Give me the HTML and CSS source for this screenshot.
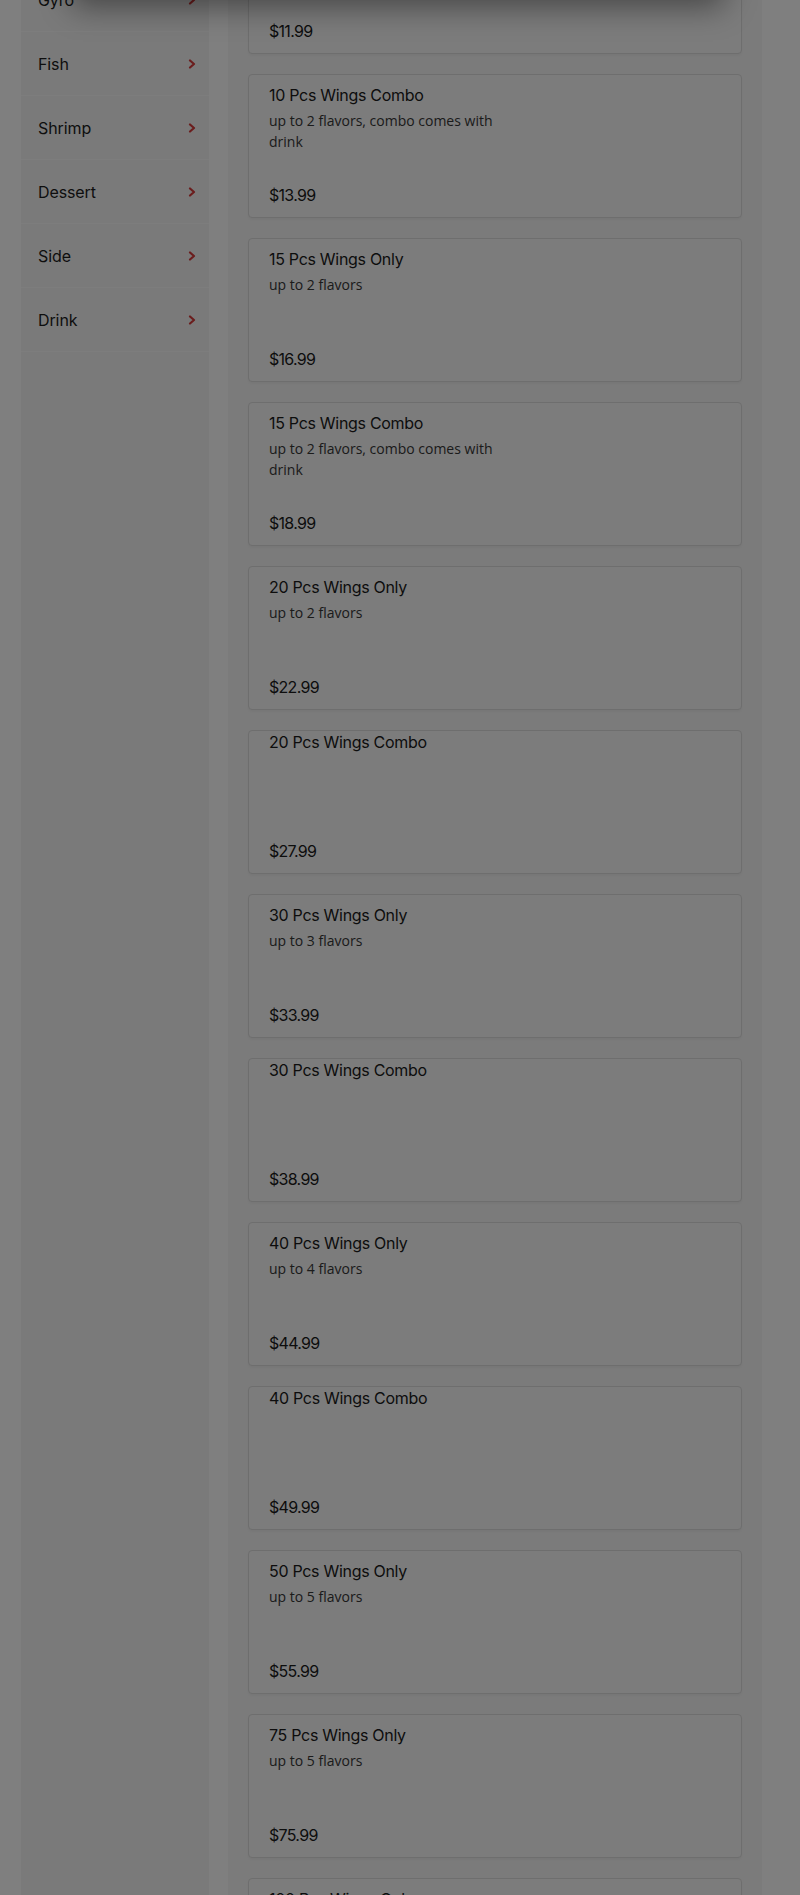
FILE: index.html
```html
<!DOCTYPE html>
<html lang="en">
<head>
<meta charset="utf-8">
<title>Menu</title>
<link rel="stylesheet" href="styles.css">
</head>
<body>
<div class="page">
  <aside class="sidebar">
    <ul class="cats">
      <li class="cat"><span>Gyro</span><svg class="chev" viewBox="0 0 8 10"><path d="M2 1.5 L6 5 L2 8.5"/></svg></li>
      <li class="cat"><span>Fish</span><svg class="chev" viewBox="0 0 8 10"><path d="M2 1.5 L6 5 L2 8.5"/></svg></li>
      <li class="cat"><span>Shrimp</span><svg class="chev" viewBox="0 0 8 10"><path d="M2 1.5 L6 5 L2 8.5"/></svg></li>
      <li class="cat"><span>Dessert</span><svg class="chev" viewBox="0 0 8 10"><path d="M2 1.5 L6 5 L2 8.5"/></svg></li>
      <li class="cat"><span>Side</span><svg class="chev" viewBox="0 0 8 10"><path d="M2 1.5 L6 5 L2 8.5"/></svg></li>
      <li class="cat"><span>Drink</span><svg class="chev" viewBox="0 0 8 10"><path d="M2 1.5 L6 5 L2 8.5"/></svg></li>
    </ul>
  </aside>
  <main class="main">
    <div class="cards">
      <div class="card"><div class="title">10 Pcs Wings Only</div><div class="desc">up to 2 flavors</div><div class="price">$11.99</div></div>
      <div class="card"><div class="title">10 Pcs Wings Combo</div><div class="desc">up to 2 flavors, combo comes with drink</div><div class="price">$13.99</div></div>
      <div class="card"><div class="title">15 Pcs Wings Only</div><div class="desc">up to 2 flavors</div><div class="price">$16.99</div></div>
      <div class="card"><div class="title">15 Pcs Wings Combo</div><div class="desc">up to 2 flavors, combo comes with drink</div><div class="price">$18.99</div></div>
      <div class="card"><div class="title">20 Pcs Wings Only</div><div class="desc">up to 2 flavors</div><div class="price">$22.99</div></div>
      <div class="card card--plain"><div class="title">20 Pcs Wings Combo</div><div class="price">$27.99</div></div>
      <div class="card"><div class="title">30 Pcs Wings Only</div><div class="desc">up to 3 flavors</div><div class="price">$33.99</div></div>
      <div class="card card--plain"><div class="title">30 Pcs Wings Combo</div><div class="price">$38.99</div></div>
      <div class="card"><div class="title">40 Pcs Wings Only</div><div class="desc">up to 4 flavors</div><div class="price">$44.99</div></div>
      <div class="card card--plain"><div class="title">40 Pcs Wings Combo</div><div class="price">$49.99</div></div>
      <div class="card"><div class="title">50 Pcs Wings Only</div><div class="desc">up to 5 flavors</div><div class="price">$55.99</div></div>
      <div class="card"><div class="title">75 Pcs Wings Only</div><div class="desc">up to 5 flavors</div><div class="price">$75.99</div></div>
      <div class="card"><div class="title">100 Pcs Wings Only</div><div class="desc">up to 5 flavors</div><div class="price">$99.99</div></div>
    </div>
  </main>
</div>
<div class="overlay"></div>
<div class="modal"></div>
</body>
</html>
```

FILE: styles.css
```css
html, body {
  margin: 0;
  padding: 0;
  overflow: hidden;
  background: #ffffff;
}

body {
  font-family: Inter, "Liberation Sans", sans-serif;
  color: #222222;
}

.page {
  display: flex;
  align-items: stretch;
  gap: 19px;
  padding-left: 21px;
  min-height: 1895px;
}

.sidebar {
  width: 188px;
  flex: none;
  background: #f5f5f5;
}

.cats {
  list-style: none;
  margin: -32px 0 0 0;
  padding: 0;
}

.cat {
  height: 64px;
  box-sizing: border-box;
  display: flex;
  align-items: center;
  justify-content: space-between;
  padding: 0 13px 0 17px;
  background: #f4f4f4;
  border-bottom: 1px solid #fafafa;
  font-size: 16px;
  line-height: 20px;
  font-weight: 400;
  letter-spacing: -0.1px;
  color: #1c1c1c;
}

.chev {
  width: 8px;
  height: 10px;
  fill: none;
  stroke: #d63a3a;
  stroke-width: 2.2;
  stroke-linecap: round;
  stroke-linejoin: round;
}

.main {
  width: 534px;
  flex: none;
  background: #f7f7f7;
  padding: 0 20px;
  box-sizing: border-box;
}

.cards {
  display: flex;
  flex-direction: column;
  gap: 20px;
  margin-top: -90px;
}

.card {
  height: 144px;
  box-sizing: border-box;
  border: 1px solid #dcdcdc;
  border-radius: 4px;
  background: #f8f8f8;
  box-shadow: 0 2px 3px rgba(0, 0, 0, 0.04);
  padding: 10px 20px 12px;
  display: flex;
  flex-direction: column;
}

.card--plain {
  padding-top: 1px;
}

.title {
  font-size: 16px;
  line-height: 20px;
  font-weight: 400;
  letter-spacing: -0.3px;
  color: #1a1a1a;
  margin-bottom: 5px;
}

.desc {
  font-family: "Open Sans", sans-serif;
  font-size: 14px;
  line-height: 21px;
  color: #363636;
  width: 260px;
}

.price {
  margin-top: auto;
  font-size: 16px;
  line-height: 20px;
  font-weight: 400;
  letter-spacing: -0.7px;
  color: #1a1a1a;
}

.overlay {
  position: fixed;
  inset: 0;
  background: rgba(0, 0, 0, 0.5);
  z-index: 10;
}

.modal {
  position: fixed;
  top: -500px;
  left: 72px;
  width: 652px;
  height: 500px;
  background: #ffffff;
  box-shadow: 0 6px 30px rgba(0, 0, 0, 0.45);
  z-index: 11;
}
```
